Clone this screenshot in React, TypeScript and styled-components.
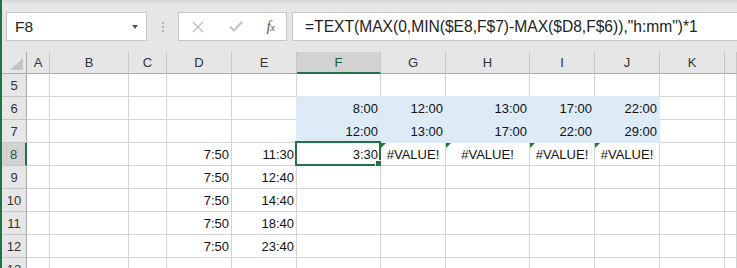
import styled, { createGlobalStyle } from "styled-components";

const GREEN = "#217346";
const GRID = "#d4d4d4";
const FILL = "#ddebf7";

const GlobalStyle = createGlobalStyle`
  html, body {
    margin: 0;
    height: 100%;
    overflow: hidden;
    background: #fff;
  }
  body {
    font-family: "Liberation Sans", Arial, sans-serif;
  }
`;

const Window = styled.div`
  height: 268px;
  box-sizing: border-box;
  border-left: 2px solid ${GREEN};
  background: #e6e6e6;
  overflow: hidden;
  display: flex;
  flex-direction: column;
`;

const FormulaBar = styled.div`
  height: 52px;
  flex: none;
  box-sizing: border-box;
  padding: 12px 0 11px 4px;
  display: flex;
  align-items: stretch;
  background: linear-gradient(#d8d8d8 0, #e6e6e6 4px);
`;

const NameBox = styled.div`
  width: 141px;
  box-sizing: border-box;
  border: 1px solid #c6c6c6;
  background: #fff;
  display: flex;
  align-items: center;
  justify-content: space-between;
  padding: 0 8px 0 8px;
  font-size: 15.5px;
  color: #222;
`;

const DropArrow = styled.span`
  width: 0;
  height: 0;
  border-left: 3.5px solid transparent;
  border-right: 3.5px solid transparent;
  border-top: 4px solid #555;
  margin-top: 1px;
`;

const Grip = styled.div`
  width: 31px;
  display: flex;
  flex-direction: column;
  align-items: center;
  justify-content: center;
  gap: 2px;
`;

const GripDot = styled.span`
  width: 2px;
  height: 2px;
  background: #b0b0b0;
`;

const ActionBox = styled.div`
  width: 109px;
  box-sizing: border-box;
  margin-right: 5px;
  border: 1px solid #c6c6c6;
  background: #fff;
  display: flex;
  align-items: center;
`;

const IconSlot = styled.div<{ $w: number }>`
  width: ${(p) => p.$w}px;
  display: flex;
  align-items: center;
  justify-content: center;
`;

const FxLabel = styled.span`
  font-family: "Liberation Serif", "Times New Roman", serif;
  font-style: italic;
  font-size: 15px;
  color: #555;
  letter-spacing: -0.5px;

  small {
    font-size: 11px;
  }
`;

const FormulaInput = styled.div`
  flex: 1;
  box-sizing: border-box;
  border: 1px solid #c6c6c6;
  border-right: none;
  background: #fff;
  display: flex;
  align-items: center;
  padding-left: 12px;
  font-size: 15.6px;
  color: #222;
  white-space: nowrap;
  overflow: hidden;
`;

const colWidths = [25, 23, 79, 38, 65, 65, 84, 65, 84, 65, 65, 65];
const colNames = ["A", "B", "C", "D", "E", "F", "G", "H", "I", "J", "K", ""];

const Sheet = styled.div`
  flex: 1;
  display: grid;
  grid-template-columns: ${colWidths.map((w) => `${w}px`).join(" ")} 1fr;
  grid-template-rows: 22px;
  grid-auto-rows: 23px;
  background: #fff;
  overflow: hidden;
`;

const Corner = styled.div`
  box-sizing: border-box;
  background: #e6e6e6;
  border-right: 1px solid #ababab;
  border-bottom: 1px solid #ababab;
  display: flex;
  align-items: flex-end;
  justify-content: flex-end;
  padding: 0 3px 3px 0;
`;

const SelectAll = styled.span`
  width: 0;
  height: 0;
  border-left: 13px solid transparent;
  border-bottom: 12px solid #c4c4c4;
`;

const ColHeader = styled.div<{ $active?: boolean }>`
  box-sizing: border-box;
  background: ${(p) => (p.$active ? "#d2d2d2" : "#e6e6e6")};
  border-right: 1px solid #c6c6c6;
  border-bottom: ${(p) => (p.$active ? `2px solid ${GREEN}` : "1px solid #ababab")};
  display: flex;
  align-items: center;
  justify-content: center;
  font-size: 13px;
  color: ${(p) => (p.$active ? "#1d5b3a" : "#333")};
`;

const RowHeader = styled.div<{ $active?: boolean }>`
  box-sizing: border-box;
  background: ${(p) => (p.$active ? "#d2d2d2" : "#e6e6e6")};
  border-bottom: 1px solid #c6c6c6;
  border-right: ${(p) => (p.$active ? `2px solid ${GREEN}` : "1px solid #ababab")};
  display: flex;
  align-items: center;
  justify-content: center;
  font-size: 13px;
  color: ${(p) => (p.$active ? "#1d5b3a" : "#333")};
`;

type Align = "left" | "right" | "center";

const Cell = styled.div<{ $align: Align; $fill: boolean; $rb: string; $bb: string; $err: boolean }>`
  position: relative;
  box-sizing: border-box;
  min-width: 0;
  background: ${(p) => (p.$fill ? FILL : "#fff")};
  border-right: 1px solid ${(p) => p.$rb};
  border-bottom: 1px solid ${(p) => p.$bb};
  display: flex;
  align-items: center;
  justify-content: ${(p) => (p.$align === "right" ? "flex-end" : p.$align === "center" ? "center" : "flex-start")};
  padding: 0 2px 0 2px;
  font-size: 13px;
  color: #111;
  white-space: nowrap;

  &::before {
    content: "";
    display: ${(p) => (p.$err ? "block" : "none")};
    position: absolute;
    top: 0;
    left: 0;
    width: 0;
    height: 0;
    border-top: 5px solid #1e7b34;
    border-right: 5px solid transparent;
  }
`;

const Selection = styled.div`
  position: absolute;
  top: -2px;
  left: -2px;
  right: -1px;
  bottom: -1px;
  border: 2px solid ${GREEN};
  pointer-events: none;
`;

const FillHandle = styled.span`
  position: absolute;
  right: -3px;
  bottom: -3px;
  width: 6px;
  height: 6px;
  background: ${GREEN};
  box-shadow: 0 0 0 1px #fff;
`;

// row -> column letter -> value
const data: Record<number, Record<string, string>> = {
  6: { F: "8:00", G: "12:00", H: "13:00", I: "17:00", J: "22:00" },
  7: { F: "12:00", G: "13:00", H: "17:00", I: "22:00", J: "29:00" },
  8: { D: "7:50", E: "11:30", F: "3:30", G: "#VALUE!", H: "#VALUE!", I: "#VALUE!", J: "#VALUE!" },
  9: { D: "7:50", E: "12:40" },
  10: { D: "7:50", E: "14:40" },
  11: { D: "7:50", E: "18:40" },
  12: { D: "7:50", E: "23:40" },
};

const rows = [5, 6, 7, 8, 9, 10, 11, 12, 13];
const filledCols = ["F", "G", "H", "I", "J"];

function isFilled(row: number, col: string) {
  return (row === 6 || row === 7) && filledCols.includes(col);
}

const formula = '=TEXT(MAX(0,MIN($E8,F$7)-MAX($D8,F$6)),"h:mm")*1';

export default function App() {
  return (
    <>
      <GlobalStyle />
      <Window>
        <FormulaBar>
          <NameBox>
            F8
            <DropArrow />
          </NameBox>
          <Grip>
            <GripDot />
            <GripDot />
            <GripDot />
          </Grip>
          <ActionBox>
            <IconSlot $w={38}>
              <svg width="12" height="12" viewBox="0 0 12 12">
                <path d="M1 1L11 11M11 1L1 11" stroke="#bdbdbd" strokeWidth="1.3" fill="none" />
              </svg>
            </IconSlot>
            <IconSlot $w={38}>
              <svg width="14" height="11" viewBox="0 0 14 11">
                <path d="M1 5.5L5 9.5L13 1" stroke="#c2c2c2" strokeWidth="2" fill="none" />
              </svg>
            </IconSlot>
            <IconSlot $w={31}>
              <FxLabel>
                f<small>x</small>
              </FxLabel>
            </IconSlot>
          </ActionBox>
          <FormulaInput>{formula}</FormulaInput>
        </FormulaBar>
        <Sheet>
          <Corner>
            <SelectAll />
          </Corner>
          {colNames.map((name, i) => (
            <ColHeader key={`h${i}`} $active={name === "F"}>
              {name}
            </ColHeader>
          ))}
          {rows.map((row) => [
            <RowHeader key={`r${row}`} $active={row === 8}>
              {row}
            </RowHeader>,
            ...colNames.map((name, i) => {
              const col = name || "L";
              const value = data[row]?.[col] ?? "";
              const fill = isFilled(row, col);
              const rightFilled = fill || (col === "E" && (row === 6 || row === 7));
              const bottomFilled = fill || (row === 5 && filledCols.includes(col));
              const err = value === "#VALUE!";
              return (
                <Cell
                  key={`${row}-${i}`}
                  $align={err ? "center" : "right"}
                  $fill={fill}
                  $rb={rightFilled ? FILL : GRID}
                  $bb={bottomFilled ? FILL : GRID}
                  $err={err}
                >
                  {value}
                  {row === 8 && col === "F" && (
                    <Selection>
                      <FillHandle />
                    </Selection>
                  )}
                </Cell>
              );
            }),
          ])}
        </Sheet>
      </Window>
    </>
  );
}
